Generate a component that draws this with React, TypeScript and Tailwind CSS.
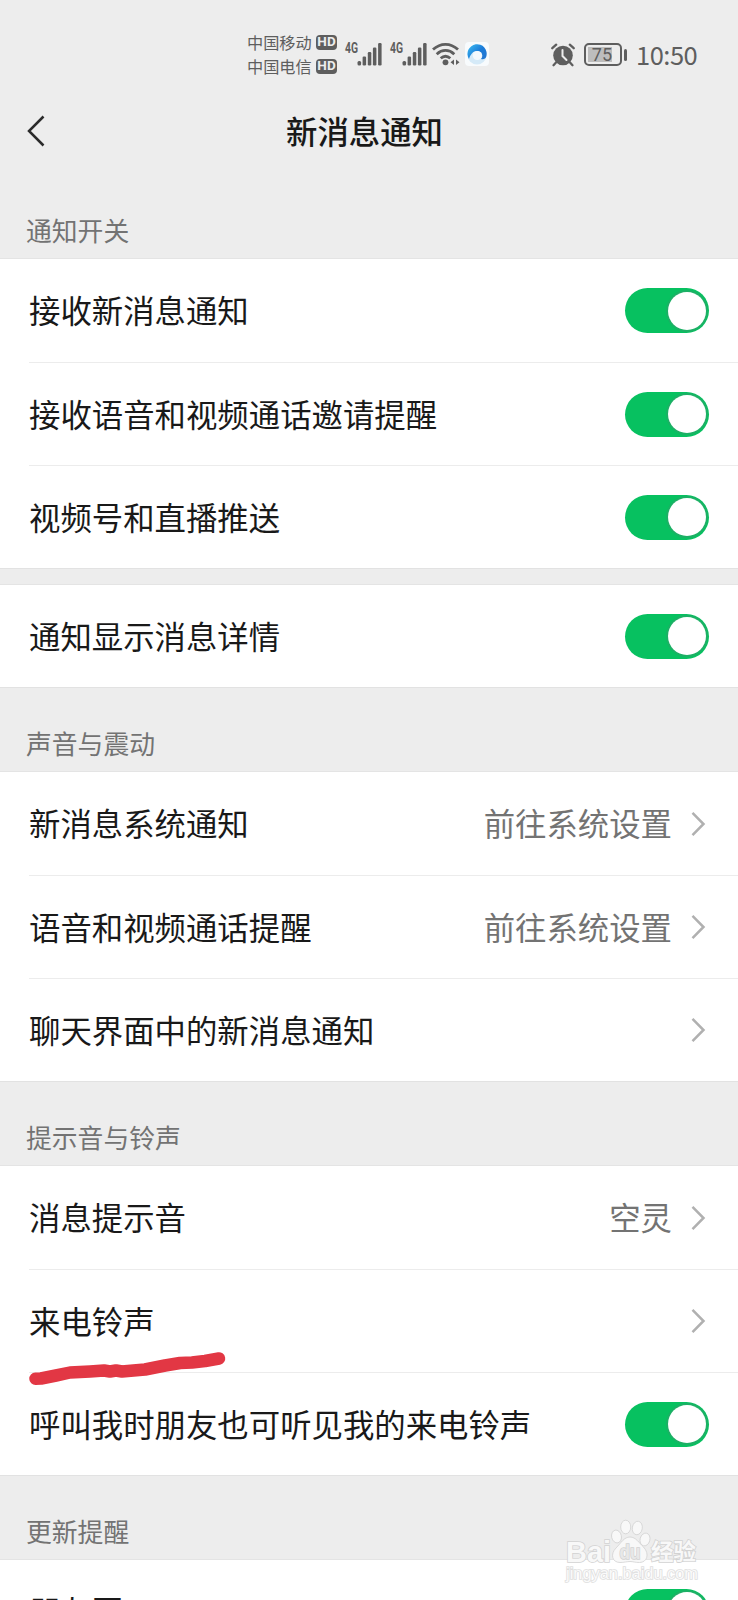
import React, { useState } from "react";

type Item = {
  label: string;
  value?: string;
  toggle?: boolean;
};

const alertItems: Item[] = [
  { label: "接收新消息通知", toggle: true },
  { label: "接收语音和视频通话邀请提醒", toggle: true },
  { label: "视频号和直播推送", toggle: true },
];

const soundItems: Item[] = [
  { label: "新消息系统通知", value: "前往系统设置" },
  { label: "语音和视频通话提醒", value: "前往系统设置" },
  { label: "聊天界面中的新消息通知" },
];

const ringtoneItems: Item[] = [
  { label: "消息提示音", value: "空灵" },
  { label: "来电铃声" },
  { label: "呼叫我时朋友也可听见我的来电铃声", toggle: true },
];

function Signal() {
  return (
    <svg className="overflow-visible" width="37" height="24" viewBox="0 0 37 24" fill="#5e5e5e">
      <text
        x="0"
        y="10.5"
        fontSize="14"
        fontWeight="700"
        fontFamily="Roboto, sans-serif"
        textLength="13"
        lengthAdjust="spacingAndGlyphs"
      >
        4G
      </text>
      <rect x="12.5" y="19" width="3.6" height="4.5" rx="1.5" />
      <rect x="17.6" y="14.5" width="3.5" height="9" rx="1.2" />
      <rect x="22.8" y="10" width="3.5" height="13.5" rx="1.2" />
      <rect x="27.9" y="5.5" width="3.5" height="18" rx="1.2" />
      <rect x="33.1" y="1" width="3.5" height="22.5" rx="1.2" />
    </svg>
  );
}

function Wifi() {
  return (
    <svg width="28" height="24" viewBox="0 0 28 24" fill="none" stroke="#5e5e5e" strokeWidth="2.8">
      <path d="M1 7.6C8.5 .6 18.5 .6 26 7.6" />
      <path d="M4.7 12.2C10 7.2 17 7.2 22.3 12.2" />
      <path d="M8.7 16.3C12 13.4 15 13.4 18.3 16.3" />
      <circle cx="13.5" cy="20.3" r="2.9" fill="#5e5e5e" stroke="none" />
      <path d="M22 17.5v5.5l-3.5-2.7zM24 17.5v5.5l3.5-2.7z" fill="#5e5e5e" stroke="none" />
    </svg>
  );
}

function BrowserLogo() {
  return (
    <svg width="24" height="24" viewBox="0 0 24 24">
      <defs>
        <linearGradient id="ring" x1="0" y1="0" x2="1" y2="0.8">
          <stop offset="0" stopColor="#3fc0f3" />
          <stop offset="0.6" stopColor="#1b7bd8" />
          <stop offset="1" stopColor="#2277d2" />
        </linearGradient>
      </defs>
      <rect width="24" height="24" rx="4" fill="#f8fbfd" />
      <circle cx="12" cy="13" r="9.5" fill="#d5eaf8" />
      <path
        d="M4 17A9.6 9.6 0 1 1 21.3 14.5C20.5 17 18.5 17.8 16 17C19 13.5 16.5 9 12 9C8 9 5.5 12.5 4 17Z"
        fill="url(#ring)"
      />
      <circle cx="12.3" cy="13.5" r="4.6" fill="#f4f9fd" />
    </svg>
  );
}

function Alarm() {
  return (
    <svg width="24" height="24" viewBox="0 0 24 24" fill="none" stroke="#5e5e5e" strokeLinecap="round">
      <circle cx="12" cy="12.5" r="9.8" fill="#5e5e5e" stroke="none" />
      <path d="M1.3 5.2L5.2 1.7M22.7 5.2L18.8 1.7" strokeWidth="2.3" />
      <path d="M5 19.5L2.5 22.2M19 19.5L21.5 22.2" strokeWidth="2.3" />
      <path d="M11.5 7v6l4 4" stroke="#ededed" strokeWidth="2" />
    </svg>
  );
}

function StatusBar() {
  return (
    <div className="flex h-[86px] items-start pt-[30px] pl-[247px] text-[#5e5e5e]">
      <div className="flex w-[98px] flex-col">
        {["中国移动", "中国电信"].map((name) => (
          <div key={name} className="flex h-6 items-center">
            <span className="w-[69px] text-[16.2px] leading-6 whitespace-nowrap">{name}</span>
            <span className="flex h-[15px] w-[21px] items-center justify-center rounded bg-[#5e5e5e] font-[Roboto] text-[13.5px] leading-none font-bold text-[#ededed]">
              HD
            </span>
          </div>
        ))}
      </div>
      <div className="mt-[11.5px] flex">
        <Signal />
        <div className="ml-[8px]">
          <Signal />
        </div>
        <div className="ml-[5px]">
          <Wifi />
        </div>
        <div className="ml-[5px]">
          <BrowserLogo />
        </div>
      </div>
      <div className="mt-[12px] ml-[62px] flex items-center">
        <Alarm />
        <div className="ml-[9px] flex h-[23px] w-[38px] items-center rounded-[5px] border-2 border-[#5e5e5e] p-0.5">
          <div className="flex h-[15px] w-[24px] items-center justify-end bg-[#bdbdbd] font-[Roboto] text-[18px] leading-none">
            75
          </div>
        </div>
        <div className="ml-[2px] h-[12px] w-[3px] rounded-sm bg-[#5e5e5e]" />
        <span className="ml-[9px] pb-px text-[25.5px] leading-6 tracking-[-0.5px] whitespace-nowrap">10:50</span>
      </div>
    </div>
  );
}

function Toggle() {
  const [on, setOn] = useState(true);

  return (
    <button
      onClick={() => setOn(!on)}
      className={`flex h-[45px] w-[84px] items-center rounded-full px-[3px] ${
        on ? "justify-end bg-[#07c160]" : "justify-start bg-[#d9d9d9]"
      }`}
    >
      <span className="h-[38px] w-[38px] rounded-full bg-white shadow-[0_0_0_2px_rgba(50,160,105,0.5)]" />
    </button>
  );
}

function Chevron() {
  return (
    <svg width="15" height="26" viewBox="0 0 15 26" fill="none" stroke="#b0b0b0" strokeWidth="2.5">
      <path d="M1.5 1.8L12.5 13L1.5 24.2" />
    </svg>
  );
}

function Row({ item, first }: { item: Item; first: boolean }) {
  return (
    <div className="flex h-full pl-[29px]">
      <div
        className={`flex flex-1 items-center justify-between pr-[29px] ${
          first ? "" : "border-t border-[#ececec]"
        }`}
      >
        <span className="pb-px text-[31.4px] leading-none whitespace-nowrap text-[#191919]">{item.label}</span>
        {item.toggle ? (
          <Toggle />
        ) : (
          <div className="flex items-center pr-[3px]">
            {item.value && (
              <span className="mr-[19px] pb-px text-[31.4px] leading-none text-[#737373]">{item.value}</span>
            )}
            <Chevron />
          </div>
        )}
      </div>
    </div>
  );
}

function Group({ items }: { items: Item[] }) {
  return (
    <div className="bg-white shadow-[0_-1px_0_#e4e4e4,0_1px_0_#e2e2e2]">
      {items.map((item, i) => (
        <div key={item.label} className={items.length > 1 ? "h-[103px]" : "h-[102px]"}>
          <Row item={item} first={i === 0} />
        </div>
      ))}
    </div>
  );
}

function SectionTitle({ children }: { children: React.ReactNode }) {
  return (
    <div className="flex h-[85px] items-end pb-4 pl-[26px] text-[25.8px] leading-none text-[#737373]">
      <span>{children}</span>
    </div>
  );
}

function Watermark() {
  return (
    <svg
      className="absolute top-[1514px] left-[560px]"
      width="145"
      height="75"
      viewBox="0 0 145 75"
      fill="#f8f8f8"
      stroke="#d2d2d2"
      strokeWidth="1.6"
      fontFamily="'Liberation Sans', 'Noto Sans CJK SC', sans-serif"
    >
      <text
        x="6"
        y="47.5"
        fontSize="30"
        fontWeight="700"
        textLength="45"
        lengthAdjust="spacingAndGlyphs"
        paintOrder="stroke"
      >
        Bai
      </text>
      <g strokeWidth="0.8">
        <ellipse cx="56.5" cy="22.5" rx="4.9" ry="6.5" transform="rotate(-12 56.5 22.5)" />
        <ellipse cx="65.7" cy="13" rx="5" ry="6.8" />
        <ellipse cx="77.3" cy="14" rx="5" ry="6.8" transform="rotate(10 77.3 14)" />
        <ellipse cx="85" cy="25.5" rx="4.9" ry="6.5" transform="rotate(15 85 25.5)" />
        <path d="M70 23C76 23 79 29 83.5 33C90 40 87 48.5 79.5 48.5C75 48.5 73 47.5 70 47.5C67 47.5 64 48.5 60 48.5C52 48.5 50 40 56 34C61 29 64 23 70 23Z" />
      </g>
      <text
        x="59.5"
        y="45"
        fontSize="20"
        fontWeight="700"
        textLength="21"
        lengthAdjust="spacingAndGlyphs"
        fill="#e8e8e8"
        paintOrder="stroke"
      >
        du
      </text>
      <text x="91" y="45.5" fontSize="22.5" fontWeight="700" paintOrder="stroke">
        经验
      </text>
      <text
        x="6"
        y="64.5"
        fontSize="16"
        textLength="132"
        lengthAdjust="spacingAndGlyphs"
        fill="#fafafa"
        stroke="#dedede"
        paintOrder="stroke"
      >
        jingyan.baidu.com
      </text>
    </svg>
  );
}

export default function App() {
  return (
    <div className="relative h-[1600px] w-[738px] overflow-hidden bg-[#ededed] font-['Noto_Sans_CJK_SC',sans-serif]">
      <StatusBar />

      <div className="flex h-[88px] items-center">
        <svg className="mt-px ml-[26px]" width="20" height="34" viewBox="0 0 20 34" fill="none" stroke="#2b2b2b" strokeWidth="2.5">
          <path d="M17.5 2.5L3 17L17.5 31.5" />
        </svg>
        <h1 className="ml-[240px] pt-[2px] text-[31.4px] leading-none font-medium text-[#191919]">新消息通知</h1>
      </div>

      <SectionTitle>通知开关</SectionTitle>
      <Group items={alertItems} />
      <div className="h-[17px]" />
      <Group items={[{ label: "通知显示消息详情", toggle: true }]} />

      <SectionTitle>声音与震动</SectionTitle>
      <Group items={soundItems} />

      <SectionTitle>提示音与铃声</SectionTitle>
      <Group items={ringtoneItems} />

      <SectionTitle>更新提醒</SectionTitle>
      <Group items={[{ label: "朋友圈", toggle: true }]} />

      {/* hand-drawn underline below 来电铃声 */}
      <svg
        className="absolute top-[1345px] left-[20px]"
        width="215"
        height="45"
        viewBox="0 0 215 45"
        fill="none"
        stroke="#e23744"
        strokeWidth="12.5"
        strokeLinecap="round"
        strokeLinejoin="round"
      >
        <path d="M15.5 33.7L21 33.5L36 30.5L50 27.5L70 26.5L84 25.5L90 26.5L96 25.5L102 26.5L125 24.5L145 20.5L160 18L172 17.5L185 16L199 13.5" />
      </svg>

      <Watermark />
    </div>
  );
}
